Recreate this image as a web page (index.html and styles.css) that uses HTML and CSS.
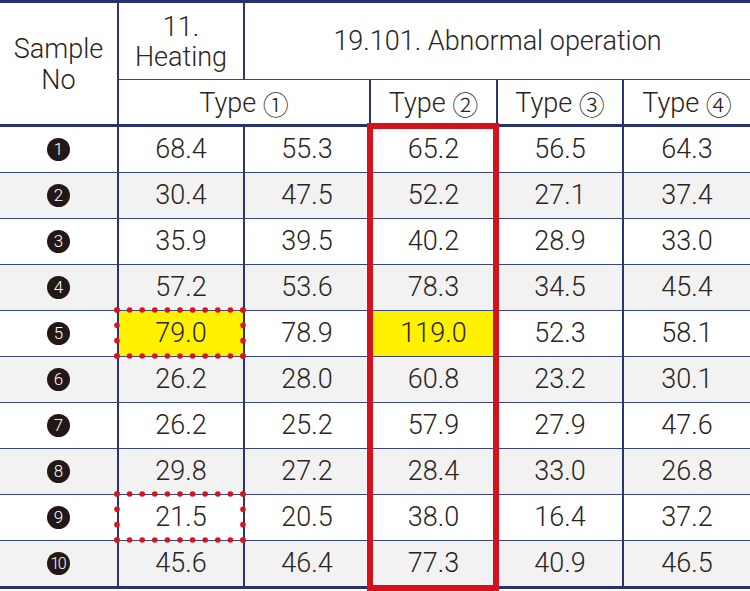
FILE: index.html
```html
<!DOCTYPE html>
<html>
<head>
<meta charset="utf-8">
<link rel="stylesheet" href="styles.css">
</head>
<body>
<div class="sheet">
  <div class="grid">
    <div class="c nl sample">Sample<br>No</div>
    <div class="c heat">11.<br>Heating</div>
    <div class="c abn">19.101. Abnormal operation</div>
    <div class="c h2 t1">Type&nbsp;<span class="cd">①</span></div>
    <div class="c h2">Type&nbsp;<span class="cd">②</span></div>
    <div class="c h2">Type&nbsp;<span class="cd">③</span></div>
    <div class="c h2">Type&nbsp;<span class="cd">④</span></div>

    <div class="row"><div class="c nl"><span class="num">1</span></div><div class="c">68.4</div><div class="c">55.3</div><div class="c">65.2</div><div class="c">56.5</div><div class="c">64.3</div></div>
    <div class="row alt"><div class="c nl"><span class="num">2</span></div><div class="c">30.4</div><div class="c">47.5</div><div class="c">52.2</div><div class="c">27.1</div><div class="c">37.4</div></div>
    <div class="row"><div class="c nl"><span class="num">3</span></div><div class="c">35.9</div><div class="c">39.5</div><div class="c">40.2</div><div class="c">28.9</div><div class="c">33.0</div></div>
    <div class="row alt"><div class="c nl"><span class="num">4</span></div><div class="c">57.2</div><div class="c">53.6</div><div class="c">78.3</div><div class="c">34.5</div><div class="c">45.4</div></div>
    <div class="row"><div class="c nl"><span class="num">5</span></div><div class="c hl">79.0</div><div class="c">78.9</div><div class="c hl">119.0</div><div class="c">52.3</div><div class="c">58.1</div></div>
    <div class="row alt"><div class="c nl"><span class="num">6</span></div><div class="c">26.2</div><div class="c">28.0</div><div class="c">60.8</div><div class="c">23.2</div><div class="c">30.1</div></div>
    <div class="row"><div class="c nl"><span class="num">7</span></div><div class="c">26.2</div><div class="c">25.2</div><div class="c">57.9</div><div class="c">27.9</div><div class="c">47.6</div></div>
    <div class="row alt"><div class="c nl"><span class="num">8</span></div><div class="c">29.8</div><div class="c">27.2</div><div class="c">28.4</div><div class="c">33.0</div><div class="c">26.8</div></div>
    <div class="row"><div class="c nl"><span class="num">9</span></div><div class="c">21.5</div><div class="c">20.5</div><div class="c">38.0</div><div class="c">16.4</div><div class="c">37.2</div></div>
    <div class="row alt last"><div class="c nl"><span class="num ten">10</span></div><div class="c">45.6</div><div class="c">46.4</div><div class="c">77.3</div><div class="c">40.9</div><div class="c">46.5</div></div>
  </div>
  <svg class="overlay" width="750" height="591" viewBox="0 0 750 591">
    <rect x="370" y="126" width="126" height="462" fill="none" stroke="#d3121c" stroke-width="6"/>
    <g stroke="#d7141e" stroke-width="5.6" stroke-linecap="round" stroke-dasharray="0 12.6" fill="none">
      <line x1="117" y1="310" x2="243.05" y2="310"/>
      <line x1="117" y1="356" x2="243.05" y2="356"/>
      <line x1="117" y1="494" x2="243.05" y2="494"/>
      <line x1="117" y1="540" x2="243.05" y2="540"/>
    </g>
    <g stroke="#d7141e" stroke-width="5.6" stroke-linecap="round" stroke-dasharray="0 15.333" fill="none">
      <line x1="117" y1="310" x2="117" y2="356.05"/>
      <line x1="243" y1="310" x2="243" y2="356.05"/>
      <line x1="117" y1="494" x2="117" y2="540.05"/>
      <line x1="243" y1="494" x2="243" y2="540.05"/>
    </g>
  </svg>
</div>
</body>
</html>
```
FILE: styles.css
```css
html, body {
  margin: 0;
  padding: 0;
  background: #ffffff;
}
.sheet {
  position: relative;
  width: 750px;
  height: 591px;
  overflow: hidden;
}
.grid {
  display: grid;
  width: 750px;
  grid-template-columns: 117px 126px 126px 127px 126px 1fr;
  grid-template-rows: 77px 47px repeat(9, 46px) 48px;
  border-top: 3px solid #27326f;
  font-family: Roboto, "Noto Sans CJK JP", sans-serif;
  font-weight: 300;
  font-size: 27px;
  color: #2a2421;
}
.row {
  display: contents;
}
.c {
  box-sizing: border-box;
  display: flex;
  align-items: center;
  justify-content: center;
  text-align: center;
  border-left: 2px solid #2a3473;
  border-bottom: 1px solid #3a4683;
  background: #ffffff;
  line-height: 31px;
}
.c.nl {
  border-left: none;
}
.sample {
  grid-row: 1 / span 2;
  border-bottom: 3px solid #27326f;
  line-height: 31px;
  padding-top: 2px;
}
.heat {
  line-height: 30px;
  padding-top: 2px;
}
.abn {
  grid-column: 3 / span 4;
}
.h2 {
  border-bottom: 3px solid #27326f;
  padding-top: 2px;
}
.t1 {
  grid-column: 2 / span 2;
}
.cd {
  font-family: "Noto Sans CJK JP", sans-serif;
  font-weight: 300;
  font-size: 26px;
}
.alt > .c {
  background: #f2f2f2;
}
.c.hl {
  background: #fff100;
}
.last > .c {
  border-bottom: 3px solid #27326f;
}
.num {
  display: flex;
  align-items: center;
  justify-content: center;
  width: 23px;
  height: 23px;
  border-radius: 50%;
  background: #231815;
  color: #ffffff;
  font-size: 17px;
  line-height: 1;
  font-weight: 300;
}
.num.ten {
  font-size: 16px;
  letter-spacing: -1.5px;
  text-indent: -1.5px;
}
.overlay {
  position: absolute;
  left: 0;
  top: 0;
  pointer-events: none;
}
```
